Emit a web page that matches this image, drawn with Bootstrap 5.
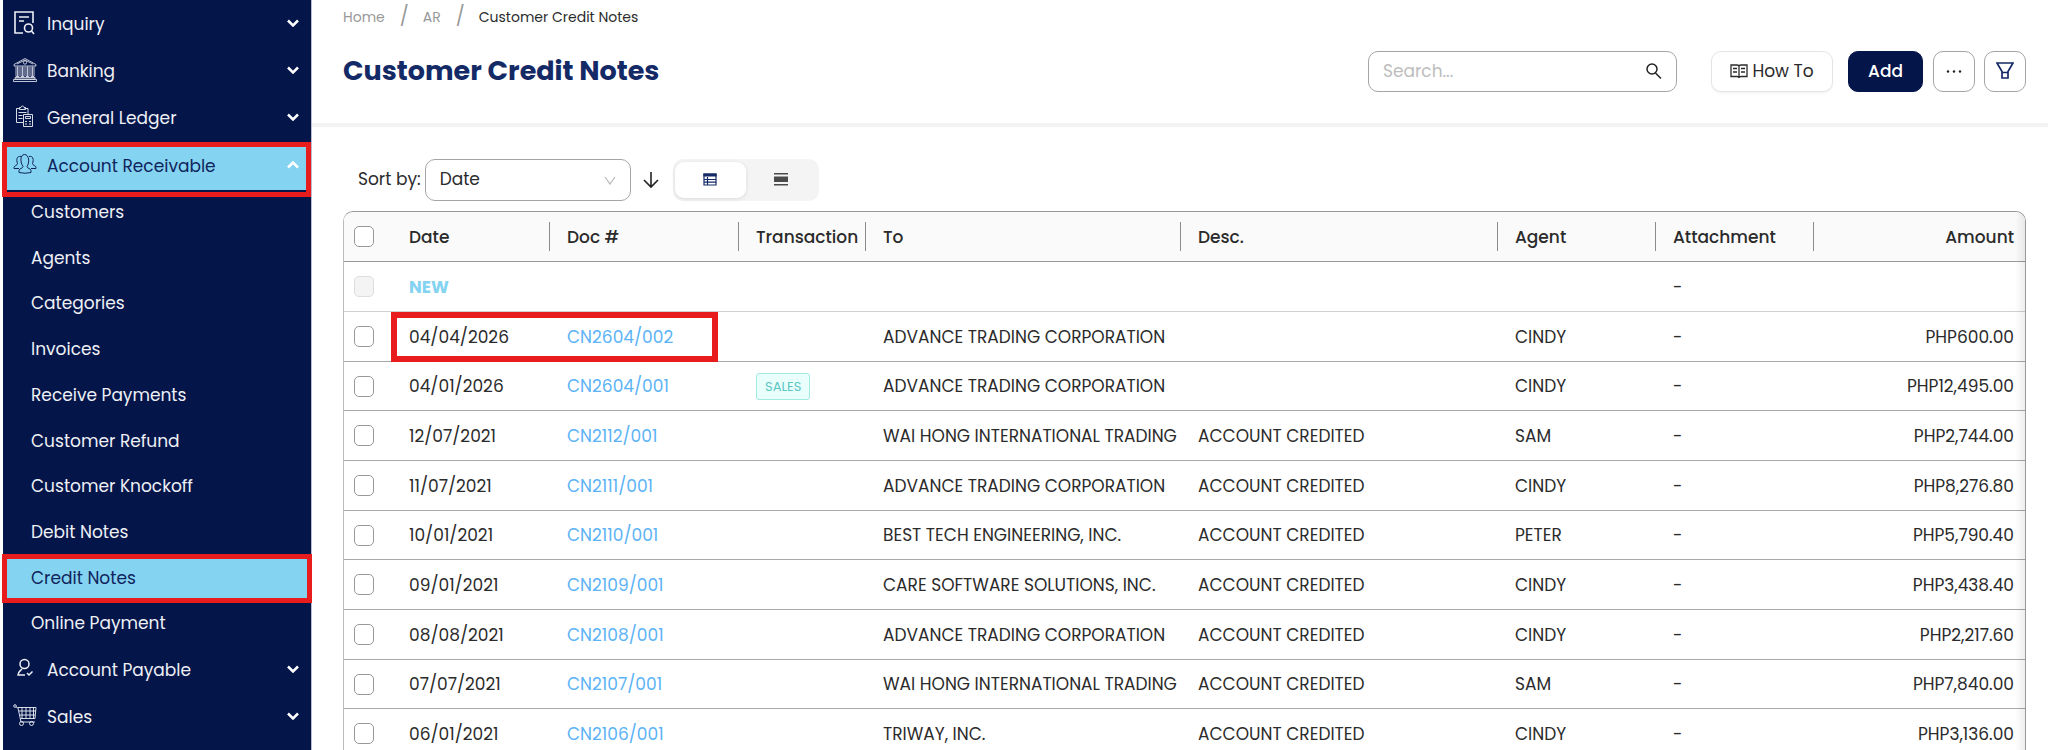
<!DOCTYPE html>
<html lang="en">
<head>
<meta charset="utf-8">
<meta name="viewport" content="width=device-width, initial-scale=1">
<title>Customer Credit Notes</title>
<link rel="stylesheet" href="https://cdn.jsdelivr.net/npm/bootstrap@5.3.0/dist/css/bootstrap.min.css">
<style>
body{font-family:Poppins,Inter,"Noto Sans",sans-serif;font-size:17px;color:#2b2b2b;background:#fff}
a{text-decoration:none}
.shell{height:100vh;overflow:hidden}
/* sidebar */
.side{width:309px;margin-left:3px;padding-top:1px;background:#04154a;border-right:1px solid #b9bdcf}
.side a{color:#eef0f5;display:flex;align-items:center;position:relative}
.side-top{height:47px;padding:0 12px 0 10px}
.side-top .ico{width:24px;height:24px;margin:0 10px 4px 0;fill:none;stroke:currentColor}
.side-top .chev{width:12px;height:8px;margin-bottom:4px;fill:none;stroke:#fff;stroke-width:2.5}
.side-top.open-group{height:48px;padding-top:2px}
.sub-list{display:grid;grid-auto-rows:1fr;height:457px}
.sub-list a{padding-left:28px}
.side a.hot{color:#10245c}
.hot::before{content:"";position:absolute;inset:5px 0 0;background:#84d3f1}
.hot>*{position:relative}
.hot::after{content:"";position:absolute;inset:0 0 -7px -1px;border:5px solid #e81c1c;z-index:2}
.sub-list .hot::before{inset:3px 0}
.sub-list .hot::after{inset:-2px -1px}
/* page header */
.page-head{padding:0 22px 0 31px;height:127px;border-bottom:4px solid #f3f3f3}
.crumbs{height:35px;font-size:14px;color:#999}
.crumbs a{color:#999}
.crumbs .sl{font-size:19px;padding:0 14px 0 15px}
.crumbs [aria-current]{color:#2b2b2b}
.page-title{font-size:27px;font-weight:700;color:#142a66}
.box{height:41px;border:1px solid #a5a5a5;border-radius:10px;background:#fff}
.search{width:309px}
.search input{border:0;outline:0;background:none;width:100%;padding:0 14px;color:#2b2b2b}
.search input::placeholder{color:#bdbdbd}
.search svg{margin-right:14px}
.btn.box{padding:0;color:#2b2b2b;font-size:17px}
.btn.how{border-color:#e4e4e4;width:122px;margin-left:34px;box-shadow:0 2px 2px #0000000a}
.btn.add{background:#04154a;border-color:#04154a;color:#fff;font-weight:500;width:75px;margin:0 10px 0 15px}
.btn.sq{width:42px}
.btn.sq+.sq{margin-left:9px}
/* list tools */
.tools{padding:32px 0 10px 15px}
.sort-wrap{position:relative}
.sort-wrap svg{position:absolute;right:15px;top:17px;pointer-events:none}
.sort-wrap .box{width:206px;height:42px;appearance:none;padding:0 14px;color:#2b2b2b}
.btn.dir{margin:0 14px 0 12px}
.seg{width:146px;height:42px;background:#f4f4f4;border-radius:10px;padding:3px 2px}
.seg button{border:0;background:none;border-radius:9px;width:71px;padding:0}
.seg .on{background:#fff;box-shadow:0 1px 4px #0000001c}
/* table */
.content-pad{padding:0 22px 0 31px}
.frame{border:1px solid #999;border-left-color:#bbb;border-radius:10px 10px 0 0;overflow:hidden;border-bottom:0;position:relative}
.frame::after{content:"";position:absolute;inset:0 0 0 auto;width:10px;background:linear-gradient(90deg,#0000,#00000012);pointer-events:none}
.grid{table-layout:fixed;width:100%;border-collapse:separate;border-spacing:0;line-height:24px}
.grid th,.grid td{height:50px;padding:0 0 0 17px;border-bottom:1px solid #a8a8a8;white-space:nowrap;vertical-align:middle;position:relative}
.grid tbody tr:nth-child(3n) td{height:49px}
.grid tbody tr:first-child td{border-bottom-color:#d0d0d0}
.grid th{font-weight:500;background:#fafafa;border-bottom-color:#999}
.grid th+th+th::before{content:"";position:absolute;left:-1px;top:10px;height:29px;width:1px;background:#8c8c8c}
.grid th:first-child,.grid td:first-child{padding-left:10px}
.grid th:last-child,.grid td:last-child{text-align:right;padding-right:11px}
.grid input{appearance:none;display:block;width:20px;height:21px;border:1px solid #999;border-radius:5px;background:#fff;margin:0}
.grid input:disabled{background:#f4f4f4;border-color:#ddd}
.grid a{color:#5cb3f6}
.grid .new-row{color:#84d3f1;font-weight:700}
.c-check{width:48px}.c-std{width:158px}.c-doc{width:189px}.c-tran{width:127px}.c-to{width:315px}.c-desc{width:317px}
.tagx{display:inline-block;font-size:13px;line-height:25px;padding:0 8px;border:1px solid #a0eae2;border-radius:3px;background:#e9fffc;color:#5cc6c4;vertical-align:middle}
.callout{position:absolute;left:-1px;right:-168px;top:0;bottom:-1px;border:6px solid #e81c1c;z-index:2;pointer-events:none}
</style>
</head>
<body>
<div class="shell d-flex">
<nav class="side flex-shrink-0" aria-label="Modules">
<a class="side-top" href="#"><svg class="ico" viewBox="0 0 24 24" stroke-width="1.6"><path d="M10 22H2V1h18v11M6 6h10M6 10h5"/><circle cx="15.500" cy="17" r="4"/><path d="m18.500 20 2.500 3"/></svg><span class="flex-fill">Inquiry</span><svg class="chev" viewBox="0 0 12 8"><path d="m1 1.500 5 5 5-5"/></svg></a>
<a class="side-top" href="#"><svg class="ico" viewBox="0 0 24 24" stroke-width=".8"><path d="M1 6.500 12 .5l11 6V8H1zM4 6 12 2l8 4M3 8.500v10h3v-10M8 8.500v10h3v-10M13 8.500v10h3v-10M18 8.500v10h3v-10M4.500 8.500v10M9.500 8.500v10M14.500 8.500v10M19.500 8.500v10M2 19.500h20V21H2zM.5 21.500h23v2H.5z"/><circle cx="12" cy="4.500" r="1.700"/></svg><span class="flex-fill">Banking</span><svg class="chev" viewBox="0 0 12 8"><path d="m1 1.500 5 5 5-5"/></svg></a>
<a class="side-top" href="#"><svg class="ico" viewBox="0 0 24 24" stroke-width=".9"><path d="M10 17.500H3.500v-14h3M11.500 3.500H15V9M6.500 4.500v-2H8c0-2 3-2 3 0h1.500v2zM5.500 7.500h8M5.500 10.500h4M5.500 13.500h4"/><path d="M10.500 9.500h9v12h-9zM12.500 11.500h5v2h-5zM12 16.500h2M16 16.500h2M12 19h2M16 19h2"/></svg><span class="flex-fill">General Ledger</span><svg class="chev" viewBox="0 0 12 8"><path d="m1 1.500 5 5 5-5"/></svg></a>
<a class="side-top open-group hot" href="#" aria-expanded="true"><svg class="ico" viewBox="0 0 24 24" stroke-width="1"><path d="M6 19.500v-2c0-2 4-2 4-4-3-4-3-12 1.500-12s5.500 8 2.500 12c0 2 4 2 4 4v2q-6 1.500-12 0zM8 3.500c-4-1-5 3-3.500 7 0 2-3.500 2-3.500 4v1h5M16 3.500c4-1 5 3 3.500 7 0 2 3.500 2 3.500 4v1h-5"/></svg><span class="flex-fill">Account Receivable</span><svg class="chev" viewBox="0 0 12 8"><path d="m1 6.500 5-5 5 5"/></svg></a>
<div class="sub-list">
<a href="#">Customers</a>
<a href="#">Agents</a>
<a href="#">Categories</a>
<a href="#">Invoices</a>
<a href="#">Receive Payments</a>
<a href="#">Customer Refund</a>
<a href="#">Customer Knockoff</a>
<a href="#">Debit Notes</a>
<a class="hot" href="#" aria-current="page"><span>Credit Notes</span></a>
<a href="#">Online Payment</a>
</div>
<a class="side-top" href="#"><svg class="ico" viewBox="0 0 24 24" stroke-width="1.500"><circle cx="11.500" cy="7" r="4.500"/><path d="M9 12c-2 2-4 3-4 6h7M14 16l2 2 3.500-3.500"/></svg><span class="flex-fill">Account Payable</span><svg class="chev" viewBox="0 0 12 8"><path d="m1 1.500 5 5 5-5"/></svg></a>
<a class="side-top" href="#"><svg class="ico" viewBox="0 0 24 24" stroke-width=".9"><circle cx="2" cy="2" r="1.300"/><path d="m3 3 2 1 3 14h14M5 3.500h18l-1 11H7.500M6 7h17M6.500 11H22M9 3.500v11M13 3.500v11M17 3.500v11M20.500 3.500v11"/><circle cx="8.500" cy="19.500" r="2"/><circle cx="18.500" cy="19.500" r="2"/></svg><span class="flex-fill">Sales</span><svg class="chev" viewBox="0 0 12 8"><path d="m1 1.500 5 5 5-5"/></svg></a>
</nav>
<main class="flex-grow-1">
<header class="page-head">
<nav class="crumbs d-flex align-items-center" aria-label="Breadcrumb"><a href="#">Home</a><span class="sl">/</span><a href="#">AR</a><span class="sl">/</span><span aria-current="page">Customer Credit Notes</span></nav>
<div class="d-flex align-items-center pt-3">
<h1 class="page-title me-auto mb-0">Customer Credit Notes</h1>
<div class="search box d-flex align-items-center"><input type="search" aria-label="Search" placeholder="Search...">
<svg class="flex-shrink-0" width="16" height="17" viewBox="0 0 16 17" fill="none" stroke="#222" stroke-width="1.500"><circle cx="6" cy="6" r="5"/><path d="M9.500 10 15 15.500"/></svg></div>
<button class="btn box how d-flex align-items-center justify-content-center gap-1" type="button"><svg width="18" height="15" viewBox="0 0 18 15" fill="none" stroke="#2b2b2b" stroke-width="1.300"><path d="M1 1h6q2 0 2 1.500Q9 1 11 1h6v11.500h-6q-2 0-2 1.300 0-1.300-2-1.300H1zM9 2v12M3 4.500h4M3 8h4M11 4.500h4M11 8h4"/></svg>How To</button>
<button class="btn box add" type="button">Add</button>
<button class="btn box sq d-flex align-items-center justify-content-center" type="button" aria-label="More"><svg width="16" height="4" viewBox="0 0 16 4" fill="#222"><circle cx="2" cy="1.500" r="1.200"/><circle cx="8" cy="1.500" r="1.200"/><circle cx="14" cy="1.500" r="1.200"/></svg></button>
<button class="btn box sq d-flex align-items-center justify-content-center" type="button" aria-label="Filter"><svg width="18" height="19" viewBox="0 0 18 19" fill="none" stroke="#142a66" stroke-width="1.700"><path d="M1 1h16l-5 8.500V16H6V9.500zM6 10.500h6"/></svg></button>
</div>
</header>
<div class="content-pad">
<div class="tools d-flex align-items-center">
<label class="me-1" for="sort">Sort by:</label>
<div class="sort-wrap"><select class="box" id="sort"><option>Date</option></select><svg width="12" height="9" viewBox="0 0 12 9" fill="none" stroke="#b5b5b5" stroke-width="1.200"><path d="m1 1 5 7 5-7"/></svg></div>
<button class="btn dir border-0 p-0 d-flex" type="button" aria-label="Sort descending"><svg width="16" height="17" viewBox="0 0 16 17" fill="none" stroke="#222" stroke-width="1.600"><path d="M8 0v15M1 8l7 7 7-7"/></svg></button>
<div class="seg d-flex">
<button class="on d-flex align-items-center justify-content-center" type="button" aria-label="Table view"><svg width="14" height="14" viewBox="0 0 14 14" fill="none" stroke="#142a66" stroke-width="1.200"><path d="M1 1h12v11H1zM4.500 4v8M1 6.500h12M1 9.200h12"/><path fill="#142a66" d="M1 1h12v2H1z"/></svg></button>
<button class="d-flex align-items-center justify-content-center" type="button" aria-label="List view"><svg width="14" height="14" viewBox="0 0 14 14" fill="#4a4a4a"><path d="M0 0h14v1.500H0zM0 3.500h14v5.500H0zM0 11h14v1.500H0z"/></svg></button>
</div>
</div>
<div class="frame">
<table class="grid">
<colgroup><col class="c-check"><col class="c-std"><col class="c-doc"><col class="c-tran"><col class="c-to"><col class="c-desc"><col class="c-std"><col class="c-std"><col></colgroup>
<thead><tr><th><input type="checkbox" aria-label="Select all"></th><th>Date</th><th>Doc #</th><th>Transaction</th><th>To</th><th>Desc.</th><th>Agent</th><th>Attachment</th><th>Amount</th></tr></thead>
<tbody>
<tr><td><input type="checkbox" aria-label="New row" disabled></td><td class="new-row">NEW</td><td></td><td></td><td></td><td></td><td></td><td>-</td><td></td></tr>
<tr><td><input type="checkbox" aria-label="Select CN2604/002"></td><td>04/04/2026<span class="callout"></span></td><td><a href="#">CN2604/002</a></td><td></td><td>ADVANCE TRADING CORPORATION</td><td></td><td>CINDY</td><td>-</td><td>PHP600.00</td></tr>
<tr><td><input type="checkbox" aria-label="Select CN2604/001"></td><td>04/01/2026</td><td><a href="#">CN2604/001</a></td><td><span class="tagx">SALES</span></td><td>ADVANCE TRADING CORPORATION</td><td></td><td>CINDY</td><td>-</td><td>PHP12,495.00</td></tr>
<tr><td><input type="checkbox" aria-label="Select CN2112/001"></td><td>12/07/2021</td><td><a href="#">CN2112/001</a></td><td></td><td>WAI HONG INTERNATIONAL TRADING</td><td>ACCOUNT CREDITED</td><td>SAM</td><td>-</td><td>PHP2,744.00</td></tr>
<tr><td><input type="checkbox" aria-label="Select CN2111/001"></td><td>11/07/2021</td><td><a href="#">CN2111/001</a></td><td></td><td>ADVANCE TRADING CORPORATION</td><td>ACCOUNT CREDITED</td><td>CINDY</td><td>-</td><td>PHP8,276.80</td></tr>
<tr><td><input type="checkbox" aria-label="Select CN2110/001"></td><td>10/01/2021</td><td><a href="#">CN2110/001</a></td><td></td><td>BEST TECH ENGINEERING, INC.</td><td>ACCOUNT CREDITED</td><td>PETER</td><td>-</td><td>PHP5,790.40</td></tr>
<tr><td><input type="checkbox" aria-label="Select CN2109/001"></td><td>09/01/2021</td><td><a href="#">CN2109/001</a></td><td></td><td>CARE SOFTWARE SOLUTIONS, INC.</td><td>ACCOUNT CREDITED</td><td>CINDY</td><td>-</td><td>PHP3,438.40</td></tr>
<tr><td><input type="checkbox" aria-label="Select CN2108/001"></td><td>08/08/2021</td><td><a href="#">CN2108/001</a></td><td></td><td>ADVANCE TRADING CORPORATION</td><td>ACCOUNT CREDITED</td><td>CINDY</td><td>-</td><td>PHP2,217.60</td></tr>
<tr><td><input type="checkbox" aria-label="Select CN2107/001"></td><td>07/07/2021</td><td><a href="#">CN2107/001</a></td><td></td><td>WAI HONG INTERNATIONAL TRADING</td><td>ACCOUNT CREDITED</td><td>SAM</td><td>-</td><td>PHP7,840.00</td></tr>
<tr><td><input type="checkbox" aria-label="Select CN2106/001"></td><td>06/01/2021</td><td><a href="#">CN2106/001</a></td><td></td><td>TRIWAY, INC.</td><td>ACCOUNT CREDITED</td><td>CINDY</td><td>-</td><td>PHP3,136.00</td></tr>
</tbody>
</table>
</div>
</div>
</main>
</div>
<script src="https://cdn.jsdelivr.net/npm/bootstrap@5.3.0/dist/js/bootstrap.bundle.min.js"></script>
</body>
</html>
